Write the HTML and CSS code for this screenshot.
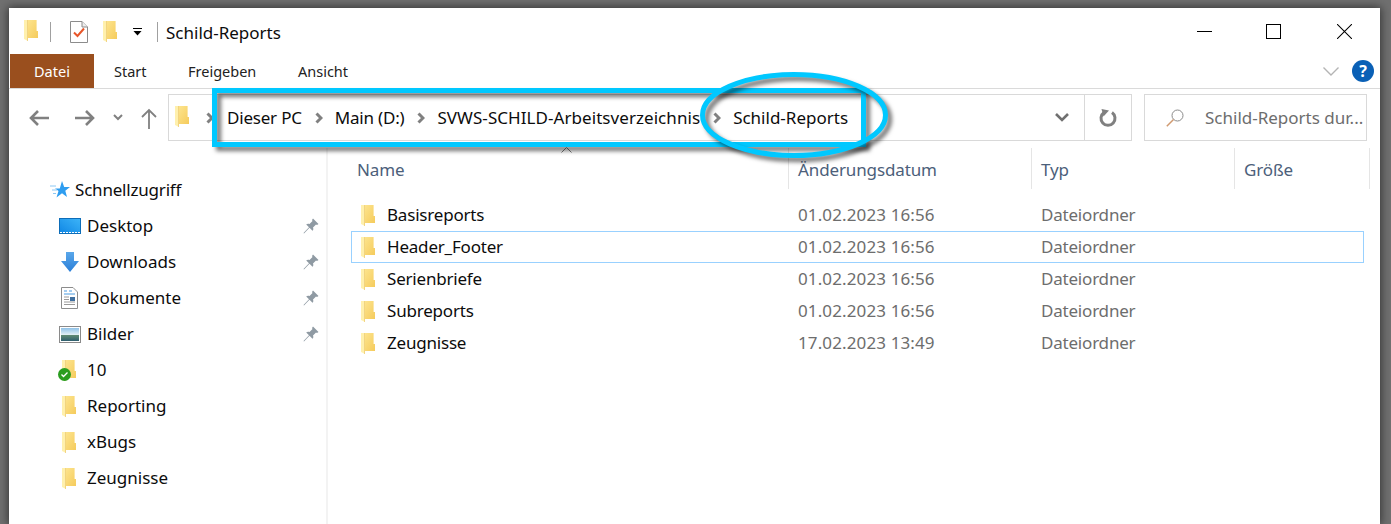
FILE: index.html
```html
<!DOCTYPE html>
<html lang="de">
<head>
<meta charset="utf-8">
<title>Schild-Reports</title>
<link rel="stylesheet" href="styles.css">
</head>
<body>
<svg class="sprite" aria-hidden="true">
  <defs>
    <linearGradient id="fold" x1="0" y1="0" x2="1" y2="1"><stop offset="0" stop-color="#fde58f"/><stop offset="1" stop-color="#f5cb5c"/></linearGradient>
    <linearGradient id="desk" x1="0" y1="1" x2="1" y2="0"><stop offset="0" stop-color="#0f86e4"/><stop offset="1" stop-color="#3db4f8"/></linearGradient>
    <linearGradient id="arrow" x1="0" y1="0" x2="0" y2="1"><stop offset="0" stop-color="#5aa7ea"/><stop offset="1" stop-color="#2a7fd8"/></linearGradient>
    <linearGradient id="land" x1="0" y1="0" x2="0" y2="1"><stop offset="0" stop-color="#8fc2e8"/><stop offset=".5" stop-color="#dfeef5"/><stop offset=".55" stop-color="#5f8a72"/><stop offset="1" stop-color="#2f5f6f"/></linearGradient>
    <symbol id="folder" viewBox="0 0 14 21">
      <path fill="url(#fold)" d="M3 0H12.6V11H14V18H3Z"/>
      <path fill="#fff0ad" d="M0 0H4V21L0 19Z"/>
      <path fill="#e8c264" d="M3.4 0H4V21H3.4Z"/>
    </symbol>
    <symbol id="chev" viewBox="0 0 8 12"><path d="M1.5 1.500L6 6L1.500 10.500" fill="none" stroke="#808080" stroke-width="3"/></symbol>
    <symbol id="pin" viewBox="0 0 16 16"><path fill="#8f9aa3" d="M10 0.500L15.500 6L14 7L13 6.500L10 9.500C10.600 11 10.300 12 9.500 12.800L6.500 9.800L1 15.500L0.500 15L6 9.300L3.200 6.500C4 5.700 5 5.400 6.500 6L9.500 3L9 2Z"/></symbol>
  </defs>
</svg>

<div class="window">
  <header class="titlebar">
    <svg class="ico-folder qa-first"><use href="#folder"/></svg>
    <span class="qa-sep"></span>
    <svg class="ico-check" viewBox="0 0 18 22"><path d="M.5.500H12L17.500 6V21.500H.5Z" fill="#fff" stroke="#8c8c8c"/><path d="M12 .5V6H17.500" fill="#eee" stroke="#8c8c8c"/><path d="M4 11.500L7.500 15L14 7.500" fill="none" stroke="#e8562a" stroke-width="2"/></svg>
    <svg class="ico-folder qa-second"><use href="#folder"/></svg>
    <svg class="ico-drop" viewBox="0 0 9 8"><path d="M0 .5H9" stroke="#000"/><path d="M.5 3H8.500L4.500 7.500Z" fill="#000"/></svg>
    <span class="qa-sep qa-sep-end"></span>
    <span class="title">Schild-Reports</span>
    <div class="controls">
      <svg class="ctl ctl-min" viewBox="0 0 15 15"><path d="M0 7.500H15" stroke="#000"/></svg>
      <svg class="ctl ctl-max" viewBox="0 0 15 15"><rect x=".5" y=".5" width="14" height="14" fill="none" stroke="#000"/></svg>
      <svg class="ctl ctl-close" viewBox="0 0 15 15"><path d="M0 0L15 15M15 0L0 15" stroke="#000" stroke-width="1.050"/></svg>
    </div>
  </header>

  <nav class="tabs">
    <span class="tab tab-file">Datei</span>
    <span class="tab tab-start">Start</span>
    <span class="tab tab-share">Freigeben</span>
    <span class="tab tab-view">Ansicht</span>
    <div class="tabs-right">
      <svg class="collapse" viewBox="0 0 16 9"><path d="M.5.5L8 8L15.500.5" fill="none" stroke="#b4b4b4" stroke-width="1.400"/></svg>
      <span class="help">?</span>
    </div>
  </nav>

  <div class="navbar">
    <svg class="nav-ico nav-back" viewBox="0 0 20 16"><path d="M20 8H2M9 1L2 8L9 15" fill="none" stroke="#808080" stroke-width="2.600"/></svg>
    <svg class="nav-ico nav-fwd" viewBox="0 0 20 16"><path d="M0 8H18M11 1L18 8L11 15" fill="none" stroke="#808080" stroke-width="2.600"/></svg>
    <svg class="nav-ico nav-hist" viewBox="0 0 10 7"><path d="M1 1L5 5L9 1" fill="none" stroke="#808080" stroke-width="2"/></svg>
    <svg class="nav-ico nav-up" viewBox="0 0 16 21"><path d="M8 21V2M1 9L8 2L15 9" fill="none" stroke="#808080" stroke-width="1.800"/></svg>
    <div class="address">
      <svg class="ico-folder addr-folder"><use href="#folder"/></svg>
      <svg class="chev chev-first"><use href="#chev"/></svg>
      <span class="crumb crumb-tight">Dieser PC</span>
      <svg class="chev"><use href="#chev"/></svg>
      <span class="crumb crumb-tight">Main (D:)</span>
      <svg class="chev"><use href="#chev"/></svg>
      <span class="crumb crumb-long">SVWS-SCHILD-Arbeitsverzeichnis</span>
      <svg class="chev"><use href="#chev"/></svg>
      <span class="crumb">Schild-Reports</span>
      <svg class="addr-drop" viewBox="0 0 14 9"><path d="M1 1L7 7L13 1" fill="none" stroke="#707070" stroke-width="2.600"/></svg>
      <span class="addr-refresh">
        <svg class="refresh" viewBox="0 0 18 18"><path d="M5 3.500A7 7 0 1 0 13 3.500" fill="none" stroke="#808080" stroke-width="3"/><path d="M2.500 0L10 1.500L4.500 7.500Z" fill="#808080"/></svg>
      </span>
    </div>
    <div class="search">
      <svg class="search-ico" viewBox="0 0 18 18"><circle cx="11.500" cy="6.500" r="5.500" fill="none" stroke="#8a8a8a"/><path d="M7.500 10.500L.8 17.200" stroke="#d09a70" stroke-width="1.500"/></svg>
      <span class="search-text">Schild-Reports dur...</span>
    </div>
  </div>

  <main class="main">
    <aside class="sidebar">
      <div class="side-row side-head">
        <svg class="side-ico star" viewBox="0 0 20 18"><path fill="#2e9df0" d="M12 0L14.200 6H20L15.300 9.700L17 16L12 12.300L6.500 16.500L8.500 10L5 7.500H9.800Z"/><path d="M0 5H6M2 9H7M3 12.500H6" stroke="#8cc8f4"/></svg>
        <span class="side-label">Schnellzugriff</span>
      </div>
      <div class="side-row">
        <span class="side-box"><svg class="side-ico desk" viewBox="0 0 22 16"><rect x=".5" y=".5" width="21" height="15" fill="url(#desk)" stroke="#0d6db8"/><path d="M1 14.500H21" stroke="#fff" stroke-dasharray="2 1"/></svg></span>
        <span class="side-label">Desktop</span>
        <svg class="pin"><use href="#pin"/></svg>
      </div>
      <div class="side-row">
        <span class="side-box"><svg class="side-ico dl" viewBox="0 0 18 20"><path fill="url(#arrow)" d="M5 0H13V9H18L9 20L0 9H5Z"/></svg></span>
        <span class="side-label">Downloads</span>
        <svg class="pin"><use href="#pin"/></svg>
      </div>
      <div class="side-row">
        <span class="side-box"><svg class="side-ico doc" viewBox="0 0 17 22"><path d="M.5.500H12L16.500 5V21.500H.5Z" fill="#fff" stroke="#8c8c8c"/><path d="M3 4H6M8 4H11M3 7H14" stroke="#4a9be0"/><path d="M3 10H8M3 12.500H8M3 15H14M3 17.500H14" stroke="#9a9a9a"/><rect x="9" y="10" width="5" height="4" fill="#3f6f9f"/></svg></span>
        <span class="side-label">Dokumente</span>
        <svg class="pin"><use href="#pin"/></svg>
      </div>
      <div class="side-row">
        <span class="side-box"><svg class="side-ico pic" viewBox="0 0 22 17"><rect x=".5" y=".5" width="21" height="16" fill="#fff" stroke="#8a8a8a"/><rect x="2" y="2" width="18" height="13" fill="url(#land)"/></svg></span>
        <span class="side-label">Bilder</span>
        <svg class="pin"><use href="#pin"/></svg>
      </div>
      <div class="side-row">
        <span class="side-box side-box-folder badge-host">
          <svg class="ico-folder"><use href="#folder"/></svg>
          <svg class="badge" viewBox="0 0 13 13"><circle cx="6.500" cy="6.500" r="6.500" fill="#2a9d1f"/><path d="M3.500 6.500L5.500 8.500L9.500 4.500" fill="none" stroke="#fff" stroke-width="1.300"/></svg>
        </span>
        <span class="side-label">10</span>
      </div>
      <div class="side-row">
        <span class="side-box side-box-folder"><svg class="ico-folder"><use href="#folder"/></svg></span>
        <span class="side-label">Reporting</span>
      </div>
      <div class="side-row">
        <span class="side-box side-box-folder"><svg class="ico-folder"><use href="#folder"/></svg></span>
        <span class="side-label">xBugs</span>
      </div>
      <div class="side-row">
        <span class="side-box side-box-folder"><svg class="ico-folder"><use href="#folder"/></svg></span>
        <span class="side-label">Zeugnisse</span>
      </div>
    </aside>

    <section class="list">
      <div class="cols">
        <span class="col col-name">Name<svg class="sort" viewBox="0 0 11 6"><path d="M.5 5.500L5.500.5L10.500 5.500" fill="none" stroke="#7a7a7a"/></svg></span>
        <span class="col">Änderungsdatum</span>
        <span class="col">Typ</span>
        <span class="col">Größe</span>
      </div>
      <div class="rows">
        <div class="row"><svg class="ico-folder"><use href="#folder"/></svg><span class="r-name">Basisreports</span><span class="r-date">01.02.2023 16:56</span><span class="r-type">Dateiordner</span></div>
        <div class="row row-sel"><svg class="ico-folder"><use href="#folder"/></svg><span class="r-name">Header_Footer</span><span class="r-date">01.02.2023 16:56</span><span class="r-type">Dateiordner</span></div>
        <div class="row"><svg class="ico-folder"><use href="#folder"/></svg><span class="r-name">Serienbriefe</span><span class="r-date">01.02.2023 16:56</span><span class="r-type">Dateiordner</span></div>
        <div class="row"><svg class="ico-folder"><use href="#folder"/></svg><span class="r-name">Subreports</span><span class="r-date">01.02.2023 16:56</span><span class="r-type">Dateiordner</span></div>
        <div class="row"><svg class="ico-folder"><use href="#folder"/></svg><span class="r-name">Zeugnisse</span><span class="r-date">17.02.2023 13:49</span><span class="r-type">Dateiordner</span></div>
      </div>
    </section>
  </main>
</div>

<svg class="annot" viewBox="0 0 1391 524" aria-hidden="true">
  <rect class="mark" x="214.500" y="90.500" width="649" height="54"/>
  <ellipse class="mark" cx="794" cy="115" rx="91.500" ry="40.500"/>
</svg>
</body>
</html>
```

FILE: styles.css
```css
* { box-sizing: border-box; }
html, body { margin: 0; height: 524px; overflow: hidden; }
body {
  position: relative;
  background: #707070;
  padding: 8px 11px 0 9px;
  font-family: "Noto Sans", "Open Sans", sans-serif;
  font-size: 17px;
  color: #0c0c0c;
}
.sprite { position: absolute; width: 0; height: 0; }
.window {
  height: 516px;
  background: #fff;
  display: flex;
  flex-direction: column;
  box-shadow: 0 0 9px 1px rgba(0, 0, 0, .55);
}
.ico-folder { width: 14px; height: 21px; flex: none; display: block; }

/* title bar */
.titlebar { height: 46px; flex: none; display: flex; align-items: center; padding-left: 15px; padding-top: 1px; }
.qa-first { margin-top: -3px; }
.qa-sep { width: 1px; height: 20px; background: #a0a0a0; margin-left: 12px; }
.ico-check { width: 18px; height: 22px; margin-left: 19px; }
.qa-second { margin-left: 15px; }
.ico-drop { width: 9px; height: 8px; margin-left: 16px; }
.qa-sep-end { margin-left: 15px; }
.title { margin-left: 8px; padding-top: 1px; }
.controls { margin-left: auto; display: flex; align-items: center; padding-right: 28px; }
.ctl { width: 15px; height: 15px; display: block; }
.ctl-max { margin-left: 54px; }
.ctl-close { margin-left: 56px; }

/* ribbon tabs */
.tabs { height: 35px; flex: none; display: flex; align-items: stretch; border-bottom: 1px solid #dadada; font-size: 14.5px; padding-left: 1px; }
.tab { display: flex; align-items: center; padding-left: 20px; color: #222; }
.tab-file { width: 84px; padding-left: 24px; background: #9a4f1e; color: #fff; }
.tab-start { width: 74px; }
.tab-share { width: 110px; }
.tabs-right { margin-left: auto; display: flex; align-items: center; padding-right: 6px; }
.collapse { width: 16px; height: 9px; }
.help { width: 22px; height: 22px; margin-left: 13px; border-radius: 50%; background: #0a60b6; color: #fff; font-size: 16px; font-weight: 700; display: flex; align-items: center; justify-content: center; }

/* address row */
.navbar { height: 59px; flex: none; display: flex; align-items: flex-start; padding-top: 5px; }
.nav-ico { display: block; flex: none; margin-top: 16px; }
.nav-back { width: 20px; height: 16px; margin-left: 20px; }
.nav-fwd { width: 20px; height: 16px; margin-left: 26px; }
.nav-hist { width: 10px; height: 7px; margin-left: 18px; margin-top: 20px; }
.nav-up { width: 16px; height: 21px; margin-left: 18px; margin-top: 14px; }
.address { width: 964px; height: 47px; margin-left: 11px; border: 1px solid #d9d9d9; display: flex; align-items: center; padding-left: 6px; flex: none; }
.chev { width: 8px; height: 12px; flex: none; margin: 0 12px 0 13px; }
.chev-first { margin: 0 13px 0 17px; }
.addr-folder { margin-top: -2px; }
.crumb-tight { letter-spacing: -.2px; }
.crumb-long { letter-spacing: .06px; }
.addr-drop { width: 14px; height: 9px; margin-left: auto; }
.addr-refresh { width: 47px; height: 100%; margin-left: 15px; border-left: 1px solid #d9d9d9; display: flex; align-items: center; justify-content: center; }
.refresh { width: 18px; height: 18px; }
.search { width: 223px; height: 47px; margin-left: 12px; border: 1px solid #d9d9d9; display: flex; align-items: center; padding-left: 21px; flex: none; color: #6d6d6d; overflow: hidden; white-space: nowrap; }
.search-ico { width: 18px; height: 18px; flex: none; }
.search-text { margin-left: 21px; }

/* main area */
.main { flex: 1; min-height: 0; display: flex; }
.sidebar { width: 319px; flex: none; padding-top: 24px; border-right: 2px solid #f3f3f3; }
.side-row { height: 36px; display: flex; align-items: center; padding-left: 50px; padding-right: 7px; }
.side-label { padding-bottom: 2px; }
.side-box { width: 28px; flex: none; display: flex; align-items: center; }
.side-head { padding-left: 41px; letter-spacing: -.2px; }
.side-ico { display: block; flex: none; }
.star { width: 20px; height: 18px; margin-right: 5px; }
.desk { width: 22px; height: 16px; }
.dl { width: 18px; height: 20px; margin-left: 2px; }
.doc { width: 17px; height: 22px; margin-left: 2px; }
.pic { width: 22px; height: 17px; }
.pin { width: 16px; height: 16px; margin-left: auto; flex: none; }
.side-box-folder { padding-left: 3px; }
.badge-host { position: relative; }
.badge { position: absolute; width: 13px; height: 13px; left: -1px; top: 8px; }

/* file list */
.list { flex: 1; min-width: 0; }
.cols { display: grid; grid-template-columns: 461px 243px 203px 135px; height: 41px; color: #4c607a; letter-spacing: -.12px; }
.col { position: relative; border-right: 1px solid #e5e5e5; padding-left: 9px; padding-top: 2px; display: flex; align-items: center; }
.col-name { padding-left: 29px; }
.sort { position: absolute; width: 11px; height: 6px; left: 233px; top: -1px; }
.rows { padding: 10px 0 0 23px; }
.row { width: 1013px; height: 32px; display: grid; grid-template-columns: 26px 411px 243px 1fr; align-items: center; border: 1px solid transparent; padding-left: 9px; }
.row-sel { border-color: #99d1ff; }
.r-name { letter-spacing: -.2px; padding-bottom: 2px; }
.r-date { color: #6d6d6d; letter-spacing: .12px; padding-bottom: 2px; }
.r-type { color: #6d6d6d; letter-spacing: -.2px; padding-bottom: 2px; }

/* annotation on top of the screenshot */
.annot { position: absolute; left: 0; top: 0; width: 1391px; height: 524px; pointer-events: none; }
.mark { fill: none; stroke: #00c8ff; stroke-width: 5; filter: drop-shadow(4px 4px 2px rgba(0, 0, 0, .55)); }
```
